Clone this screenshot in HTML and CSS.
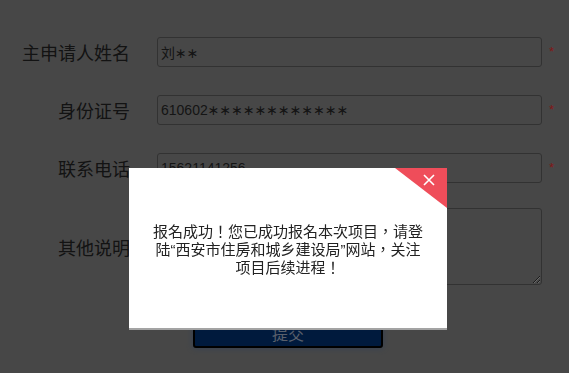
FILE: index.html
```html
<!DOCTYPE html>
<html lang="zh-CN">
<head>
    <meta charset="UTF-8">
    <meta name="viewport" content="width=device-width, initial-scale=1.0">
    <title>项目报名</title>
    <link rel="stylesheet" href="styles.css">
</head>
<body>

<form class="apply-form">
    <div class="form-row">
        <label class="form-label">主申请人姓名</label>
        <input class="form-input" type="text" value="刘∗∗">
        <span class="required">*</span>
    </div>
    <div class="form-row">
        <label class="form-label">身份证号</label>
        <input class="form-input" type="text" value="610602∗∗∗∗∗∗∗∗∗∗∗∗">
        <span class="required">*</span>
    </div>
    <div class="form-row">
        <label class="form-label">联系电话</label>
        <input class="form-input" type="text" value="15621141256">
        <span class="required">*</span>
    </div>
    <div class="form-row row-note">
        <label class="form-label">其他说明</label>
        <textarea class="form-input form-textarea"></textarea>
    </div>
    <div class="form-actions">
        <button class="submit-btn" type="button">提交</button>
    </div>
</form>

<div class="mask"></div>

<div class="dialog">
    <div class="dialog-corner">
        <svg class="dialog-close" viewBox="0 0 12 12" width="12" height="12">
            <path d="M1 1 L11 11 M11 1 L1 11" stroke="#fff" stroke-width="1.6" fill="none"/>
        </svg>
    </div>
    <p class="dialog-text">报名成功！您已成功报名本次项目，请登<br>陆“西安市住房和城乡建设局”网站，关注<br>项目后续进程！</p>
</div>

</body>
</html>
```

FILE: styles.css
```css
* {
    margin: 0;
    padding: 0;
    box-sizing: border-box;
}

body {
    font-family: "Liberation Sans", "Noto Sans CJK SC", sans-serif;
    background-color: #8f8f8f;
    width: 569px;
    height: 373px;
    overflow: hidden;
}

.apply-form {
    padding-top: 37px;
}

.form-row {
    display: flex;
    align-items: center;
    margin-bottom: 28px;
}

.form-label {
    width: 130px;
    margin-right: 27px;
    text-align: right;
    font-family: "Noto Sans CJK SC", sans-serif;
    font-size: 18px;
    color: #262626;
}

.form-input {
    width: 385px;
    height: 30px;
    padding: 0 3px;
    border: 1px solid #646464;
    border-radius: 3px;
    background: transparent;
    font-family: "Liberation Sans", "DejaVu Sans", "Noto Sans CJK SC", sans-serif;
    font-size: 14px;
    color: #2a2a2a;
}

.required {
    margin-left: 7px;
    margin-top: -2px;
    font-size: 13px;
    color: #ff3030;
}

.row-note {
    margin-top: -3px;
    margin-bottom: 33px;
}

.form-textarea {
    height: 77px;
    resize: vertical;
}

.form-actions {
    padding-left: 193px;
}

.submit-btn {
    width: 190px;
    height: 30px;
    border: 2px solid #000;
    border-radius: 3px;
    background-color: #00347a;
    color: #b4c0d8;
    font-family: "Noto Sans CJK SC", sans-serif;
    font-size: 16px;
    box-shadow: 0 0 6px rgba(80, 120, 180, 0.7);
}

.mask {
    position: fixed;
    top: 0;
    left: 0;
    right: 0;
    bottom: 0;
    background-color: rgba(0, 0, 0, 0.5);
}

.dialog {
    position: absolute;
    left: 129px;
    top: 168px;
    width: 318px;
    height: 160px;
    background-color: #fff;
    box-shadow: 0 2px 0 #a3a3a3;
    display: flex;
    align-items: center;
    justify-content: center;
}

.dialog-corner {
    position: absolute;
    top: 0;
    right: 0;
    width: 52px;
    height: 40px;
    background-color: #ef4d5a;
    clip-path: polygon(0 0, 100% 0, 100% 100%);
}

.dialog-close {
    position: absolute;
    top: 6px;
    right: 12px;
}

.dialog-text {
    margin-top: 4px;
    text-align: center;
    font-family: "Liberation Sans", "Noto Sans CJK TC", sans-serif;
    font-feature-settings: "locl" 0;
    font-size: 15px;
    line-height: 18px;
    color: #222;
}
```
